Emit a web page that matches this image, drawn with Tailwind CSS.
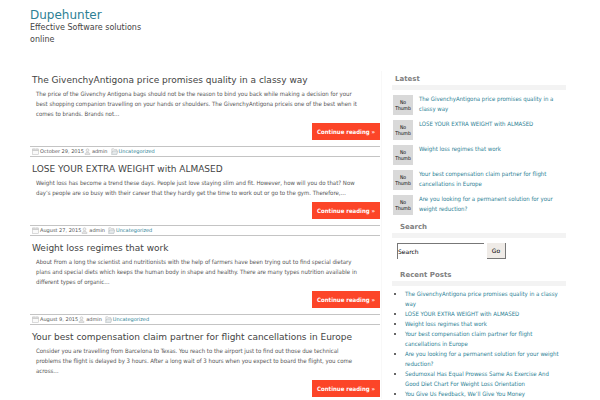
<!DOCTYPE html>
<html lang="en">
<head>
  <meta charset="UTF-8" />
  <meta name="viewport" content="width=device-width, initial-scale=1.0" />
  <title>Dupehunter</title>
  <script src="https://cdn.jsdelivr.net/npm/@tailwindcss/browser@4"></script>
</head>
<body class="bg-white font-['DejaVu_Sans_Condensed','DejaVu_Sans',sans-serif] text-[6px] leading-[10px] text-[#555] overflow-hidden">
  <!-- Icons for the post meta -->
  <svg class="hidden">
    <symbol id="calendar" viewBox="0 0 7 7">
      <rect x="0.5" y="1" width="6" height="5.5" fill="#fafafa" stroke="#c4c4c4" stroke-width="0.6" />
      <path d="M0.5 2.2h6" stroke="#b5b5b5" stroke-width="0.9" />
      <path d="M2 0.3v1.2M5 0.3v1.2" stroke="#c4c4c4" stroke-width="0.6" />
    </symbol>
    <symbol id="user" viewBox="0 0 7 7">
      <circle cx="3.5" cy="2.2" r="1.4" fill="#f2f2f2" stroke="#bcbcbc" stroke-width="0.6" />
      <path d="M1 6.4c0.2-1.7 1.3-2.2 2.5-2.2s2.3 0.5 2.5 2.2z" fill="#e6e6e6" stroke="#bcbcbc" stroke-width="0.6" />
    </symbol>
    <symbol id="folder" viewBox="0 0 7 7">
      <path d="M0.8 5V0.8h2l0.7 0.8h2.3V3" fill="#f5f5f5" stroke="#bcbcbc" stroke-width="0.6" />
      <path d="M0.5 6.4L1.6 3h5.1L5.9 6.4z" fill="#e6eaec" stroke="#b0b8bc" stroke-width="0.6" />
    </symbol>
  </svg>

  <div class="mx-[5%] pt-2">
    <header class="h-[63px] w-[120px] font-['DejaVu_Sans',sans-serif]">
      <h1 class="text-[12px] leading-[14px]"><a href="#" class="text-[#2d7f95]">Dupehunter</a></h1>
      <p class="text-[8px] leading-[12px] text-[#444]">Effective Software solutions online</p>
    </header>

    <div class="flex gap-[10px]">
      <!-- Posts -->
      <main class="flex-1 border-r border-[#f8f8f8] pr-px">
        <article class="mb-[3px]">
          <h2 class="pl-[2px] font-['DejaVu_Sans',sans-serif] text-[9px] leading-[18px] text-[#444]">The GivenchyAntigona price promises quality in a classy way</h2>
          <p class="pl-[6px] pr-[18px]">The price of the Givenchy Antigona bags should not be the reason to bind you back while making a decision for your best shopping companion travelling on your hands or shoulders. The GivenchyAntigona priceis one of the best when it comes to brands. Brands not…</p>
          <div class="mt-1 flex justify-end"><a href="#" class="bg-[#fc4528] px-[5px] leading-[17px] font-bold text-white">Continue reading »</a></div>
          <div class="mt-[6px] flex items-center border-y border-[#c4c4c4] pl-[2px] font-['DejaVu_Sans',sans-serif] text-[5px] leading-[9px]">
            <svg class="mr-px size-[7px]"><use href="#calendar" /></svg><span>October 29, 2015</span>
            <svg class="mr-px size-[7px]"><use href="#user" /></svg><span>admin</span>
            <svg class="ml-[3px] mr-px size-[7px]"><use href="#folder" /></svg><a href="#" class="text-[#2d7f95]">Uncategorized</a>
          </div>
        </article>

        <article class="mb-[3px]">
          <h2 class="pl-[2px] font-['DejaVu_Sans',sans-serif] text-[9px] leading-[18px] text-[#444]">LOSE YOUR EXTRA WEIGHT with ALMASED</h2>
          <p class="pl-[6px] pr-[18px]">Weight loss has become a trend these days. People just love staying slim and fit. However, how will you do that? Now day’s people are so busy with their career that they hardly get the time to work out or go to the gym. Therefore,…</p>
          <div class="mt-1 flex justify-end"><a href="#" class="bg-[#fc4528] px-[5px] leading-[17px] font-bold text-white">Continue reading »</a></div>
          <div class="mt-[6px] flex items-center border-y border-[#c4c4c4] pl-[2px] font-['DejaVu_Sans',sans-serif] text-[5px] leading-[9px]">
            <svg class="mr-px size-[7px]"><use href="#calendar" /></svg><span>August 27, 2015</span>
            <svg class="mr-px size-[7px]"><use href="#user" /></svg><span>admin</span>
            <svg class="ml-[3px] mr-px size-[7px]"><use href="#folder" /></svg><a href="#" class="text-[#2d7f95]">Uncategorized</a>
          </div>
        </article>

        <article class="mb-[3px]">
          <h2 class="pl-[2px] font-['DejaVu_Sans',sans-serif] text-[9px] leading-[18px] text-[#444]">Weight loss regimes that work</h2>
          <p class="pl-[6px] pr-[18px]">About From a long the scientist and nutritionists with the help of farmers have been trying out to find special dietary plans and special diets which keeps the human body in shape and healthy. There are many types nutrition available in different types of organic…</p>
          <div class="mt-1 flex justify-end"><a href="#" class="bg-[#fc4528] px-[5px] leading-[17px] font-bold text-white">Continue reading »</a></div>
          <div class="mt-[6px] flex items-center border-y border-[#c4c4c4] pl-[2px] font-['DejaVu_Sans',sans-serif] text-[5px] leading-[9px]">
            <svg class="mr-px size-[7px]"><use href="#calendar" /></svg><span>August 9, 2015</span>
            <svg class="mr-px size-[7px]"><use href="#user" /></svg><span>admin</span>
            <svg class="ml-[3px] mr-px size-[7px]"><use href="#folder" /></svg><a href="#" class="text-[#2d7f95]">Uncategorized</a>
          </div>
        </article>

        <article>
          <h2 class="pl-[2px] font-['DejaVu_Sans',sans-serif] text-[9px] leading-[18px] text-[#444]">Your best compensation claim partner for flight cancellations in Europe</h2>
          <p class="pl-[6px] pr-[18px]">Consider you are travelling from Barcelona to Texas. You reach to the airport just to find out those due technical problems the flight is delayed by 3 hours. After a long wait of 3 hours when you expect to board the flight, you come across…</p>
          <div class="mt-1 flex justify-end"><a href="#" class="bg-[#fc4528] px-[5px] leading-[17px] font-bold text-white">Continue reading »</a></div>
        </article>
      </main>

      <!-- Sidebar -->
      <aside class="w-[178px] shrink-0 pr-1 pt-[2px]">
        <section>
          <h3 class="border-b-[5px] border-[#f3f3f3] pl-[3px] font-['DejaVu_Sans',sans-serif] text-[7px] leading-[12px] font-bold text-[#808080]">Latest</h3>
          <ul class="mt-1 pl-px">
            <li class="flex gap-[6px] pb-1">
              <span class="mt-px h-5 w-[20px] shrink-0 bg-[#d9d9d9] pt-1 text-center text-[5px] leading-[6px] text-black">No<br />Thumb</span>
              <a href="#" class="text-[#2d7f95]">The GivenchyAntigona price promises quality in a classy way</a>
            </li>
            <li class="flex gap-[6px] pb-1">
              <span class="mt-px h-5 w-[20px] shrink-0 bg-[#d9d9d9] pt-1 text-center text-[5px] leading-[6px] text-black">No<br />Thumb</span>
              <a href="#" class="text-[#2d7f95]">LOSE YOUR EXTRA WEIGHT with ALMASED</a>
            </li>
            <li class="flex gap-[6px] pb-1">
              <span class="mt-px h-5 w-[20px] shrink-0 bg-[#d9d9d9] pt-1 text-center text-[5px] leading-[6px] text-black">No<br />Thumb</span>
              <a href="#" class="text-[#2d7f95]">Weight loss regimes that work</a>
            </li>
            <li class="flex gap-[6px] pb-1">
              <span class="mt-px h-5 w-[20px] shrink-0 bg-[#d9d9d9] pt-1 text-center text-[5px] leading-[6px] text-black">No<br />Thumb</span>
              <a href="#" class="text-[#2d7f95]">Your best compensation claim partner for flight cancellations in Europe</a>
            </li>
            <li class="flex gap-[6px] pb-1">
              <span class="mt-px h-5 w-[20px] shrink-0 bg-[#d9d9d9] pt-1 text-center text-[5px] leading-[6px] text-black">No<br />Thumb</span>
              <a href="#" class="text-[#2d7f95]">Are you looking for a permanent solution for your weight reduction?</a>
            </li>
          </ul>
        </section>

        <section class="mt-[2px]">
          <h3 class="border-b-[5px] border-[#f3f3f3] pl-2 font-['DejaVu_Sans',sans-serif] text-[7px] leading-[12px] font-bold text-[#808080]">Search</h3>
          <form class="mt-[5px] flex gap-[3px] pl-[5px]">
            <input type="text" value="Search" aria-label="Search" class="h-4 w-[87px] border-t border-l border-[#777] bg-white font-['DejaVu_Sans',sans-serif] text-[6px] text-black" />
            <button type="button" class="h-4 w-[19px] border-r border-b border-[#777] bg-[#efebe7] font-['DejaVu_Sans',sans-serif] text-[6px] text-black">Go</button>
          </form>
        </section>

        <section class="mt-[10px]">
          <h3 class="border-b-[5px] border-[#f3f3f3] pl-2 font-['DejaVu_Sans',sans-serif] text-[7px] leading-[12px] font-bold text-[#808080]">Recent Posts</h3>
          <ul class="mt-[3px] list-disc pl-[13px] pr-1 text-[#333]">
            <li><a href="#" class="text-[#2d7f95]">The GivenchyAntigona price promises quality in a classy way</a></li>
            <li><a href="#" class="text-[#2d7f95]">LOSE YOUR EXTRA WEIGHT with ALMASED</a></li>
            <li><a href="#" class="text-[#2d7f95]">Weight loss regimes that work</a></li>
            <li><a href="#" class="text-[#2d7f95]">Your best compensation claim partner for flight cancellations in Europe</a></li>
            <li><a href="#" class="text-[#2d7f95]">Are you looking for a permanent solution for your weight reduction?</a></li>
            <li><a href="#" class="text-[#2d7f95]">Sedumoxal Has Equal Prowess Same As Exercise And Good Diet Chart For Weight Loss Orientation</a></li>
            <li><a href="#" class="text-[#2d7f95]">You Give Us Feedback, We’ll Give You Money</a></li>
          </ul>
        </section>
      </aside>
    </div>
  </div>
</body>
</html>
